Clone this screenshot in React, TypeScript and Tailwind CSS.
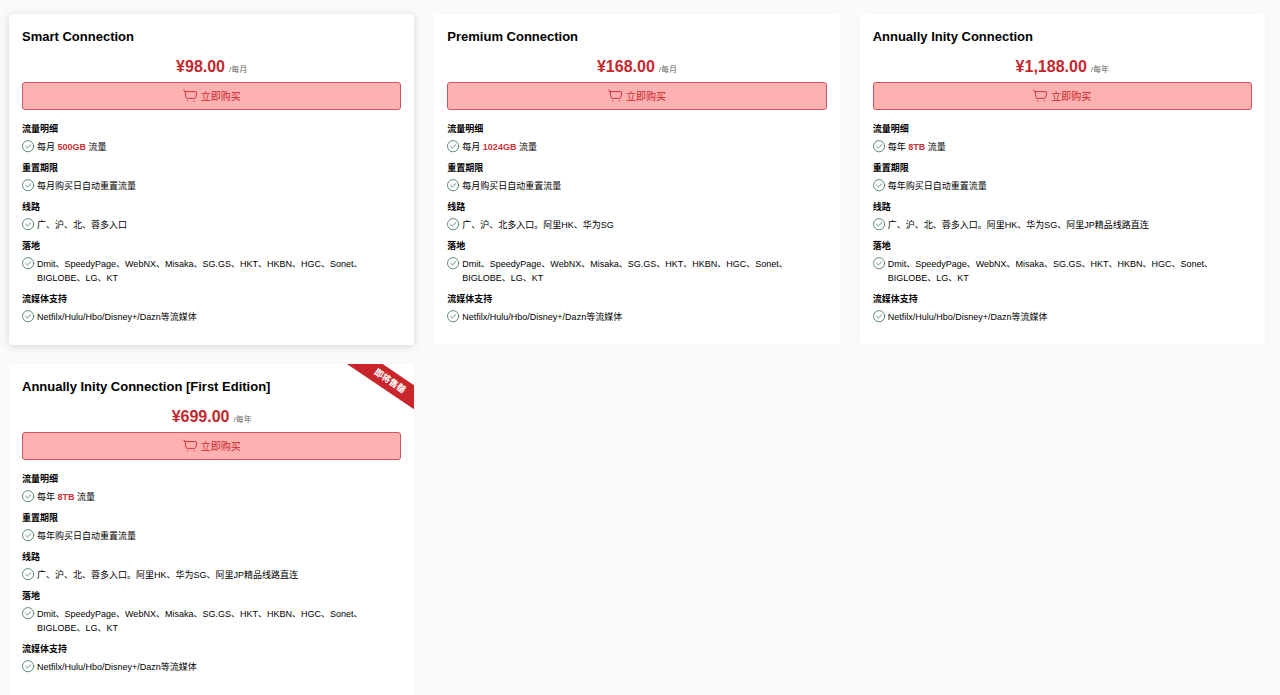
type Plan = {
  id: string;
  title: string;
  price: string;
  period: string;
  traffic: string;
  routes: string;
  ribbon?: string;
  active?: boolean;
};

const plans: Plan[] = [
  {
    id: 'smart',
    title: 'Smart Connection',
    price: '¥98.00',
    period: '每月',
    traffic: '500GB',
    routes: '广、沪、北、蓉多入口',
    active: true,
  },
  {
    id: 'premium',
    title: 'Premium Connection',
    price: '¥168.00',
    period: '每月',
    traffic: '1024GB',
    routes: '广、沪、北多入口。阿里HK、华为SG',
  },
  {
    id: 'annual',
    title: 'Annually Inity Connection',
    price: '¥1,188.00',
    period: '每年',
    traffic: '8TB',
    routes: '广、沪、北、蓉多入口。阿里HK、华为SG、阿里JP精品线路直连',
  },
  {
    id: 'annual-first',
    title: 'Annually Inity Connection [First Edition]',
    price: '¥699.00',
    period: '每年',
    traffic: '8TB',
    routes: '广、沪、北、蓉多入口。阿里HK、华为SG、阿里JP精品线路直连',
    ribbon: '即将售罄',
  },
];

function CheckIcon() {
  return (
    <svg
      className="size-[13px] shrink-0"
      viewBox="0 0 13 13"
      fill="none"
      stroke="#4f8068"
      strokeLinecap="round"
      strokeLinejoin="round"
      aria-hidden="true"
    >
      <circle cx="6.1" cy="6.2" r="5.6" strokeWidth="0.9" />
      <path d="M3.6 6.3 L5.4 8 L8.8 4.7" strokeWidth="0.9" />
    </svg>
  );
}

function CartIcon() {
  return (
    <svg
      className="h-[14px] w-[15px] shrink-0"
      viewBox="0 0 15 14"
      fill="none"
      stroke="currentColor"
      strokeWidth="0.9"
      strokeLinecap="round"
      strokeLinejoin="round"
      aria-hidden="true"
    >
      <path d="M0.6 1.2 L2 2 L3 8.4 Q3.2 9.4 4.2 9.4 H11.4 Q12.4 9.4 12.7 8.4 L13.7 4 Q13.9 2.6 12.7 2.6 H2.2" />
      <circle cx="4.6" cy="11.8" r="0.6" fill="currentColor" stroke="none" />
      <circle cx="11.2" cy="11.8" r="0.6" fill="currentColor" stroke="none" />
    </svg>
  );
}

function Feature({ heading, children }: { heading: string; children: React.ReactNode }) {
  return (
    <section className="mb-[7px]">
      <h3 className="font-bold">{heading}</h3>
      <div className="mt-1 flex items-start gap-[2px]">
        <CheckIcon />
        <p className="min-w-0 flex-1">{children}</p>
      </div>
    </section>
  );
}

function PlanCard({ plan }: { plan: Plan }) {
  return (
    <article
      className={`relative overflow-hidden rounded-[3px] bg-white px-[13px] pt-[13px] pb-[14px] ${
        plan.active ? 'shadow-[0_1px_8px_rgba(0,0,0,0.15)]' : 'shadow-[0_0_4px_rgba(0,0,0,0.02)]'
      }`}
    >
      {plan.ribbon && (
        <span className="absolute top-[7px] right-[-36px] h-5 w-[120px] rotate-[34deg] bg-[#c9262b] text-center text-[9px] leading-5 font-bold text-white">
          {plan.ribbon}
        </span>
      )}
      <h2 className="text-[13px] leading-5 font-bold">{plan.title}</h2>
      <p className="mt-2 text-center leading-6">
        <strong className="text-[16px] font-bold text-[#c4282d]">{plan.price}</strong>
        <span className="ml-1 text-[8px] text-[#666]">/{plan.period}</span>
      </p>
      <button
        type="button"
        className="mb-3 flex h-7 w-full items-center justify-center gap-[3px] rounded-[3px] border border-[#cf5560] bg-[#ffb0b0] text-[10px] text-[#c4282d]"
      >
        <CartIcon />
        立即购买
      </button>
      <div className="text-[9px] leading-[14px]">
        <Feature heading="流量明细">
          {plan.period} <strong className="font-bold text-[#cc3035]">{plan.traffic}</strong> 流量
        </Feature>
        <Feature heading="重置期限">{plan.period}购买日自动重置流量</Feature>
        <Feature heading="线路">{plan.routes}</Feature>
        <Feature heading="落地">
          Dmit、SpeedyPage、WebNX、Misaka、SG.GS、HKT、HKBN、HGC、Sonet、BIGLOBE、LG、KT
        </Feature>
        <Feature heading="流媒体支持">Netfilx/Hulu/Hbo/Disney+/Dazn等流媒体</Feature>
      </div>
    </article>
  );
}

export default function App() {
  return (
    <main className="min-h-screen bg-[#fafafa] pt-[14px] pr-[15px] pl-[9px] font-['Liberation_Sans','Noto_Sans_CJK_SC',sans-serif] text-black">
      <div className="grid grid-cols-3 gap-x-5 gap-y-[19px]">
        {plans.map((plan) => (
          <PlanCard key={plan.id} plan={plan} />
        ))}
      </div>
    </main>
  );
}
